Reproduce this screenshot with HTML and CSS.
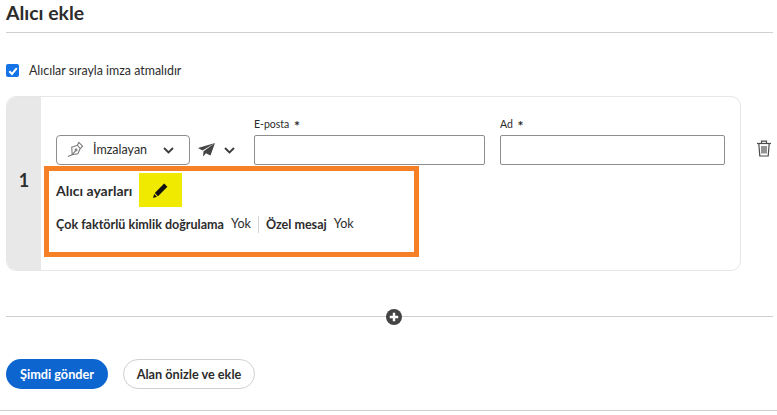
FILE: index.html
```html
<!DOCTYPE html>
<html lang="en">
<head>
    <meta charset="UTF-8">
    <meta name="viewport" content="width=device-width, initial-scale=1.0">
    <title>Alıcı ekle</title>
    <link rel="stylesheet" href="styles.css">
</head>
<body>

    <h1 class="title">Alıcı ekle</h1>

    <label class="order">
        <span class="checkbox">
            <svg width="10" height="10" viewBox="0 0 10 10"><path d="M1.3 5.2 L4 7.9 L8.8 2.2" fill="none" stroke="#fff" stroke-width="2"/></svg>
        </span>
        Alıcılar sırayla imza atmalıdır
    </label>

    <!-- Recipient card -->
    <div class="card">
        <div class="card-num">1</div>
        <div class="card-body">
            <div class="fields">
                <div class="role-select">
                    <svg class="pen" width="17" height="17" viewBox="0 0 18 18" fill="none" stroke="#777" stroke-width="1.1">
                        <path d="M5 6.5 L11 4.5 L14 8 L11.5 13.5 L5.5 14.5 Z"/>
                        <path d="M11 4.5 L12.5 1.5 L16.5 5.5 L14 8"/>
                        <path d="M5.5 14.5 L9 10.5"/>
                        <circle cx="9.6" cy="9.6" r="1"/>
                        <path d="M1 16.5 L5.5 14.5"/>
                    </svg>
                    <span class="role-name">İmzalayan</span>
                    <svg class="chev" width="11" height="7" viewBox="0 0 11 7"><path d="M1 1 L5.5 5.5 L10 1" fill="none" stroke="#3a3a3a" stroke-width="1.8"/></svg>
                </div>
                <div class="send-menu">
                    <svg width="17" height="14" viewBox="0 0 17 14" fill="#444">
                        <path d="M17 0 L0 5 L4.5 7.5 Z"/>
                        <path d="M17 0 L5.5 8.3 L5 13.5 L8 10.2 L12.5 12.5 Z"/>
                    </svg>
                    <svg class="chev" width="11" height="7" viewBox="0 0 11 7"><path d="M1 1 L5.5 5.5 L10 1" fill="none" stroke="#3a3a3a" stroke-width="1.8"/></svg>
                </div>
                <div class="field field-email">
                    <label>E-posta <span class="req">*</span></label>
                    <input type="text">
                </div>
                <div class="field field-name">
                    <label>Ad <span class="req">*</span></label>
                    <input type="text">
                </div>
            </div>

            <!-- Recipient settings -->
            <div class="settings">
                <div class="settings-head">
                    <span class="settings-title">Alıcı ayarları</span>
                    <span class="edit-btn">
                        <svg width="17" height="17" viewBox="0 0 17 17" fill="#111">
                            <path d="M12.2 1.6 L15.4 4.8 L6 14.2 L2.8 11 Z"/>
                            <path d="M2.2 12 L5 14.8 L1 16 Z"/>
                        </svg>
                    </span>
                </div>
                <div class="settings-row">
                    <b>Çok faktörlü kimlik doğrulama</b>
                    <span class="val">Yok</span>
                    <i class="sep"></i>
                    <b>Özel mesaj</b>
                    <span class="val">Yok</span>
                </div>
            </div>
        </div>
    </div>
    <svg class="trash" width="16" height="17" viewBox="0 0 16 17" fill="none" stroke="#4b4b4b" stroke-width="1.2">
        <path d="M1 3.5 H15"/>
        <path d="M5.5 3.5 V1.2 H10.5 V3.5"/>
        <path d="M2.8 3.5 L3.8 16 H12.2 L13.2 3.5"/>
        <path d="M6 6 V13.5 M8 6 V13.5 M10 6 V13.5"/>
    </svg>

    <div class="add-row">
        <span class="add-btn">
            <svg width="16" height="16" viewBox="0 0 16 16"><circle cx="8" cy="8" r="8" fill="#444"/><path d="M8 3.8 V12.2 M3.8 8 H12.2" stroke="#fff" stroke-width="2.4"/></svg>
        </span>
    </div>

    <div class="actions">
        <button class="btn-primary">Şimdi gönder</button>
        <button class="btn-secondary">Alan önizle ve ekle</button>
    </div>

    <div class="bottom-rule"></div>

</body>
</html>
```

FILE: styles.css
```css
body {
    margin: 0;
    padding: 0 4px 0 6px;
    height: 415px;
    overflow: hidden;
    position: relative;
    box-sizing: border-box;
    font-family: Lato, "Noto Sans", Arial, sans-serif;
    font-size: 12.5px;
    color: #2c2c2c;
    background-color: #fff;
}
.title {
    margin: 0;
    height: 32px;
    line-height: 26px;
    font-size: 19.4px;
    font-weight: 700;
    border-bottom: 1px solid #d0d0d0;
}
.order {
    display: flex;
    align-items: center;
    gap: 10px;
    margin-top: 31px;
    height: 13px;
    line-height: 11px;
    font-size: 12.4px;
}
.checkbox {
    width: 13px;
    height: 13px;
    border-radius: 2px;
    background-color: #1473e6;
    display: flex;
    align-items: center;
    justify-content: center;
}
.card {
    display: flex;
    width: 735px;
    height: 175px;
    box-sizing: border-box;
    margin-top: 19px;
    border: 1px solid #e6e6e6;
    border-radius: 10px;
    overflow: hidden;
}
.card-num {
    width: 34px;
    background-color: #e8e8e8;
    display: flex;
    align-items: center;
    justify-content: center;
    font-size: 18px;
    font-weight: 700;
    padding-bottom: 8px;
    box-sizing: border-box;
}
.card-body {
    flex: 1;
    padding-left: 3px;
}
.fields {
    display: flex;
    align-items: flex-end;
    height: 68px;
    padding-left: 12px;
}
.role-select {
    width: 134px;
    height: 30px;
    box-sizing: border-box;
    border: 1px solid #8e8e8e;
    border-radius: 4px;
    display: flex;
    align-items: center;
    padding: 0 0 2px 10px;
    font-size: 12.5px;
}
.role-name {
    margin-left: 9px;
    flex: 1;
}
.role-select .chev {
    margin: 2px 15px 0 0;
}
.send-menu {
    width: 64px;
    height: 30px;
    display: flex;
    align-items: center;
    gap: 9px;
    padding-left: 8px;
    box-sizing: border-box;
}
.field label {
    display: block;
    font-size: 10.5px;
    line-height: 12px;
    margin-bottom: 5px;
}
.req {
    display: inline-block;
    font-size: 14px;
    line-height: 12px;
    font-weight: 700;
    margin-left: 2px;
    transform: translateY(3px);
}
.field input {
    display: block;
    height: 30px;
    box-sizing: border-box;
    border: 1px solid #8e8e8e;
    border-radius: 2px;
    padding: 0;
    background: #fff;
}
.field-email input {
    width: 231px;
}
.field-name {
    margin-left: 15px;
}
.field-name input {
    width: 225px;
}
.settings {
    width: 375px;
    height: 91px;
    box-sizing: border-box;
    border: 5px solid #f58025;
    margin-top: 1px;
    padding: 2px 0 0 7px;
}
.settings-head {
    display: flex;
    align-items: center;
    height: 34px;
    gap: 7px;
}
.settings-title {
    font-size: 14px;
    font-weight: 700;
}
.edit-btn {
    width: 43px;
    height: 34px;
    background-color: #f0e900;
    display: flex;
    align-items: center;
    justify-content: center;
}
.settings-row {
    display: flex;
    align-items: center;
    margin-top: 8px;
    height: 18px;
    font-size: 12.55px;
}
.settings-row b {
    font-weight: 700;
}
.val {
    margin-left: 7px;
    position: relative;
    top: -1px;
}
.sep {
    width: 1px;
    height: 17px;
    background-color: #d5d5d5;
    margin: 0 7px;
}
.trash {
    position: absolute;
    left: 756px;
    top: 140px;
}
.add-row {
    margin-top: 45px;
    height: 1px;
    background-color: #cfcfcf;
    display: flex;
    justify-content: center;
    align-items: center;
    width: 767px;
}
.add-btn {
    display: flex;
    margin-right: -9px;
    background: #fff;
}
.actions {
    display: flex;
    gap: 15px;
    margin-top: 42px;
}
.actions button {
    height: 30px;
    border-radius: 15px;
    font-family: Lato, "Noto Sans", Arial, sans-serif;
    font-size: 12.7px;
    font-weight: 700;
    padding: 0;
    cursor: pointer;
}
.btn-primary {
    width: 102px;
    background-color: #0d66d0;
    color: white;
    border: none;
}
.btn-secondary {
    width: 132px;
    background: white;
    color: #2c2c2c;
    border: 1px solid #d0d0d0;
}
.bottom-rule {
    margin: 21px 0 0 -6px;
    height: 1px;
    width: 777px;
    background-color: #cfcfcf;
}
```
